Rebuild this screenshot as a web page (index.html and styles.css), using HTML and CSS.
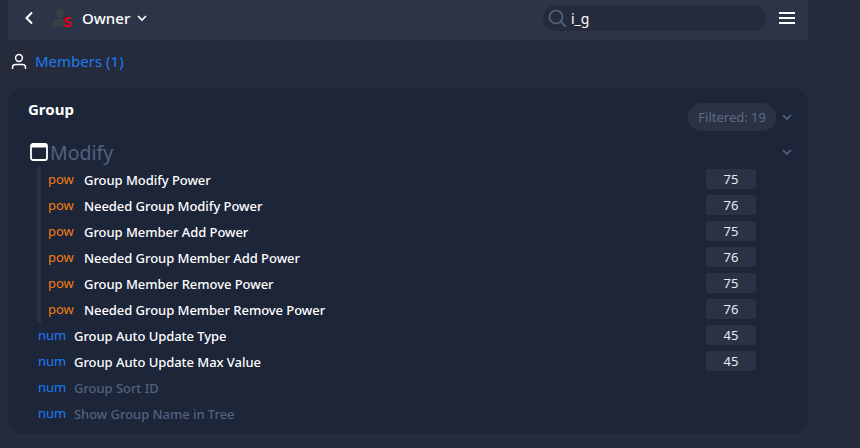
FILE: index.html
```html
<!DOCTYPE html>
<html lang="en">
<head>
    <meta charset="UTF-8">
    <title>Owner</title>
    <link rel="stylesheet" href="styles.css">
</head>
<body>
    <div class="page">
        <div class="topbar">
            <svg class="back" width="12" height="14" viewBox="0 0 12 14"><path d="M9 1.500 3.500 7 9 12.500" fill="none" stroke="#fff" stroke-width="2"/></svg>
            <span class="avatar">
                <svg width="18" height="20" viewBox="0 0 18 20"><circle cx="8" cy="5" r="4.600" fill="#3a3f45"/><path d="M0 19c0-6 3-8.500 8-8.500 3 0 4 1 5 2V19z" fill="#3a3f45"/></svg>
                <span class="avatar-s">s</span>
            </span>
            <span class="group-name">Owner</span>
            <svg class="caret" width="10" height="7" viewBox="0 0 10 7"><path d="M1 1 5 5 9 1" fill="none" stroke="#fff" stroke-width="1.600"/></svg>
            <div class="search">
                <svg width="19" height="19" viewBox="0 0 19 19"><circle cx="8" cy="8" r="6.500" fill="none" stroke="#56647f" stroke-width="1.700"/><path d="m12.700 12.700 5 5" stroke="#56647f" stroke-width="1.700"/></svg>
                <span class="search-text">i_g</span>
            </div>
            <div class="burger"><i></i><i></i><i></i></div>
        </div>

        <div class="members">
            <svg width="16" height="17" viewBox="0 0 16 17"><circle cx="8" cy="5" r="3.400" fill="none" stroke="#fff" stroke-width="1.500"/><path d="M1.500 16v-1.500c0-2 1.500-3 3-3h7c1.500 0 3 1 3 3V16" fill="none" stroke="#fff" stroke-width="1.500"/></svg>
            <a class="members-link">Members (1)</a>
        </div>

        <div class="card">
            <div class="card-head">
                <span class="card-title">Group</span>
                <span class="filtered">Filtered: 19</span>
                <svg class="chev" width="10" height="7" viewBox="0 0 10 7"><path d="M1 1 5 5 9 1" fill="none" stroke="#56647f" stroke-width="1.600"/></svg>
            </div>
            <div class="sub-head">
                <svg width="19" height="19" viewBox="0 0 19 19"><rect x="1" y="1" width="16" height="16" rx="2" fill="none" stroke="#fff" stroke-width="1.800"/><path d="M1 2h16v2.500H1z" fill="#fff"/></svg>
                <span class="sub-title">Modify</span>
                <svg class="chev" width="10" height="7" viewBox="0 0 10 7"><path d="M1 1 5 5 9 1" fill="none" stroke="#56647f" stroke-width="1.600"/></svg>
            </div>
            <div class="nested">
                <div class="row"><span class="tag pow">pow</span><span class="name">Group Modify Power</span><span class="val">75</span></div>
                <div class="row"><span class="tag pow">pow</span><span class="name">Needed Group Modify Power</span><span class="val">76</span></div>
                <div class="row"><span class="tag pow">pow</span><span class="name">Group Member Add Power</span><span class="val">75</span></div>
                <div class="row"><span class="tag pow">pow</span><span class="name">Needed Group Member Add Power</span><span class="val">76</span></div>
                <div class="row"><span class="tag pow">pow</span><span class="name">Group Member Remove Power</span><span class="val">75</span></div>
                <div class="row"><span class="tag pow">pow</span><span class="name">Needed Group Member Remove Power</span><span class="val">76</span></div>
            </div>
            <div class="row"><span class="tag num">num</span><span class="name">Group Auto Update Type</span><span class="val">45</span></div>
            <div class="row"><span class="tag num">num</span><span class="name">Group Auto Update Max Value</span><span class="val">45</span></div>
            <div class="row"><span class="tag num">num</span><span class="name off">Group Sort ID</span></div>
            <div class="row"><span class="tag num">num</span><span class="name off">Show Group Name in Tree</span></div>
        </div>
    </div>
</body>
</html>
```

FILE: styles.css
```css
body {
    margin: 0;
    background: #252b3b;
    color: #fff;
    font-family: "Noto Sans", sans-serif;
    font-size: 13px;
    overflow: hidden;
}
.page {
    width: 800px;
    margin-left: 8px;
}
.topbar {
    display: flex;
    align-items: center;
    height: 40px;
    padding: 0 0 4px 15px;
    background: #2c3548;
    border-radius: 0 0 4px 4px;
    box-sizing: border-box;
}
.avatar {
    position: relative;
    display: flex;
    width: 20px;
    height: 20px;
    margin-left: 17px;
}
.avatar-s {
    position: absolute;
    left: 11px;
    top: 2px;
    color: #d0021b;
    font-size: 18px;
    font-weight: 700;
    line-height: 20px;
}
.group-name {
    margin-left: 10px;
    font-size: 15px;
    font-weight: 500;
}
.caret {
    margin-left: 7px;
}
.search {
    display: flex;
    align-items: center;
    gap: 4px;
    width: 223px;
    height: 26px;
    margin-left: auto;
    padding-left: 5px;
    background: #252b3b;
    border-radius: 13px;
    box-sizing: border-box;
}
.search-text {
    font-size: 14px;
}
.burger {
    display: flex;
    flex-direction: column;
    gap: 3px;
    width: 16px;
    margin: 0 13px;
}
.burger i {
    height: 2px;
    background: #fff;
}
.members {
    display: flex;
    align-items: center;
    gap: 8px;
    height: 42px;
    margin-bottom: 6px;
    padding-left: 3px;
}
.members-link {
    color: #1e7bf5;
    font-size: 15px;
}
.card {
    height: 346px;
    padding: 0 16px 0 20px;
    background: #1d2539;
    border-radius: 16px;
    box-sizing: border-box;
}
.card-head {
    display: flex;
    align-items: center;
    height: 58px;
    margin-bottom: -5px;
}
.card-title {
    align-self: flex-start;
    margin-top: 11px;
    font-size: 15px;
    font-weight: 700;
}
.filtered {
    margin-left: auto;
    padding: 0 10px;
    height: 28px;
    line-height: 28px;
    background: #2a3244;
    border-radius: 14px;
    color: #5d6b87;
}
.chev {
    margin-left: 6px;
}
.sub-head {
    display: flex;
    align-items: center;
    height: 22px;
    margin-left: 2px;
}
.sub-head .chev {
    margin-left: auto;
}
.sub-title {
    margin-left: 1px;
    color: #52617f;
    font-size: 19.500px;
}
.nested {
    margin: 4px 0 0 9px;
    padding-left: 7px;
    border-left: 4px solid #2a3244;
    border-radius: 2px;
}
.row {
    display: flex;
    align-items: center;
    height: 26px;
    padding-left: 10px;
}
.nested .row {
    padding-left: 0;
}
.tag {
    width: 36px;
    margin-top: -2px;
}
.pow {
    color: #f57c14;
}
.num {
    color: #1e7bf5;
}
.name {
    font-weight: 500;
    letter-spacing: -0.050px;
}
.name.off {
    color: #52617f;
}
.val {
    width: 50px;
    height: 20px;
    margin: -2px 36px 0 auto;
    background: #2a3244;
    border-radius: 3px;
    line-height: 20px;
    text-align: center;
    color: #e8ecf4;
}
```
